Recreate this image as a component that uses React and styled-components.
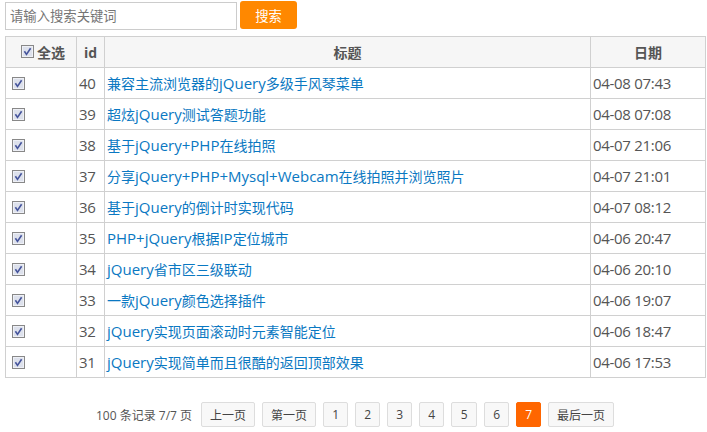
import React from "react";
import styled, { createGlobalStyle } from "styled-components";

const Global = createGlobalStyle`
  html, body { margin: 0; padding: 0; background: #fff; }
  body { font-family: "Open Sans", "Noto Sans CJK SC", sans-serif; font-size: 14px; color: #555; }
`;
const Page = styled.div`
  width: 707px; height: 432px; padding: 1px 2px 0 5px; box-sizing: border-box; overflow: hidden;
`;
const SearchBar = styled.form`
  display: flex; align-items: flex-start; gap: 3px; height: 35px; margin: 0;
`;
const SearchInput = styled.input`
  width: 232px; height: 28px; margin-top: 1px; box-sizing: border-box; border: 1px solid #ccc; padding: 0 4px;
  font: 13.33px "Open Sans", "Noto Sans CJK SC", sans-serif; color: #555; outline: none;
  &::placeholder { color: #757575; opacity: 1; }
`;
const SearchButton = styled.button`
  width: 57px; height: 28px; border: 0; border-radius: 3px; background: #ff8800; color: #fff; padding: 0;
  font: 13.33px "Open Sans", "Noto Sans CJK SC", sans-serif;
`;
const Table = styled.table`
  width: 700px; border-collapse: collapse; table-layout: fixed;
`;
const HeadCell = styled.th`
  height: 31px; padding: 0; background: #f6f6f6; border: 1px solid #d0d0d0; font-size: 14px; font-weight: 700; color: #555; text-align: center; box-sizing: border-box;
`;
const Cell = styled.td`
  height: 31px; padding: 0 2px; border: 1px solid #d0d0d0; font-size: 14px; color: #555; box-sizing: border-box; white-space: nowrap;
`;
const CheckCell = styled(Cell)` padding-left: 6px; `;
const IdCell = styled(Cell)` font-size: 15px; letter-spacing: -.4px; `;
const DateCell = styled(Cell)` font-size: 15px; letter-spacing: -.3px; `;
const Link = styled.a` color: #0a78c2; text-decoration: none; `;
const Latin = styled.span` font-size: 15px; `;
const SelectAll = styled.span`
  display: inline-flex; align-items: center; gap: 3px; margin-left: 4px;
`;
const CheckIcon = styled.svg`
  width: 13px; height: 13px; display: block; flex: none;
`;
const Pager = styled.nav`
  display: flex; align-items: center; gap: 7px; margin-top: 24px; height: 25px; font-size: 12px; padding-left: 91px;
`;
const Summary = styled.span` color: #555; margin-right: 2px; `;
const PageButton = styled.a`
  display: flex; align-items: center; justify-content: center; height: 25px; box-sizing: border-box; width: ${p => p.$w || 25}px;
  border: 1px solid ${p => p.$active ? "#ff6600" : "#ddd"}; border-radius: 2px;
  background: ${p => p.$active ? "#ff6600" : "#f8f8f8"}; color: ${p => p.$active ? "#fff" : "#444"};
`;

const Check = () => (
  <CheckIcon viewBox="0 0 13 13">
    <rect x=".5" y=".5" width="12" height="12" fill="#dfe3ee" stroke="#888" />
    <rect x="1.5" y="1.5" width="10" height="10" fill="#dde1ec" stroke="#eef0f6" />
    <path d="M3.4 6.2 5.5 9.4 9.6 3.2" fill="none" stroke="#45549c" strokeWidth="1.6" />
  </CheckIcon>
);

const Title = ({ text }) =>
  text.split(/([A-Za-z+]+)/).map((part, i) => (i % 2 ? <Latin key={i}>{part}</Latin> : part));

const rows = [
  [40, "兼容主流浏览器的jQuery多级手风琴菜单", "04-08 07:43"],
  [39, "超炫jQuery测试答题功能", "04-08 07:08"],
  [38, "基于jQuery+PHP在线拍照", "04-07 21:06"],
  [37, "分享jQuery+PHP+Mysql+Webcam在线拍照并浏览照片", "04-07 21:01"],
  [36, "基于jQuery的倒计时实现代码", "04-07 08:12"],
  [35, "PHP+jQuery根据IP定位城市", "04-06 20:47"],
  [34, "jQuery省市区三级联动", "04-06 20:10"],
  [33, "一款jQuery颜色选择插件", "04-06 19:07"],
  [32, "jQuery实现页面滚动时元素智能定位", "04-06 18:47"],
  [31, "jQuery实现简单而且很酷的返回顶部效果", "04-06 17:53"],
];

export default function App() {
  return (
    <Page>
      <Global />
      <SearchBar>
        <SearchInput placeholder="请输入搜索关键词" />
        <SearchButton type="button">搜索</SearchButton>
      </SearchBar>
      <Table>
        <colgroup>
          <col style={{ width: 71 }} /><col style={{ width: 28 }} /><col style={{ width: 486 }} /><col style={{ width: 115 }} />
        </colgroup>
        <thead>
          <tr>
            <HeadCell><SelectAll><Check />全选</SelectAll></HeadCell>
            <HeadCell>id</HeadCell>
            <HeadCell>标题</HeadCell>
            <HeadCell>日期</HeadCell>
          </tr>
        </thead>
        <tbody>
          {rows.map(([id, title, date]) => (
            <tr key={id}>
              <CheckCell><Check /></CheckCell>
              <IdCell>{id}</IdCell>
              <Cell><Link><Title text={title} /></Link></Cell>
              <DateCell>{date}</DateCell>
            </tr>
          ))}
        </tbody>
      </Table>
      <Pager>
        <Summary>100 条记录 7/7 页</Summary>
        <PageButton $w={54}>上一页</PageButton>
        <PageButton $w={54}>第一页</PageButton>
        {[1, 2, 3, 4].map(n => <PageButton key={n}>{n}</PageButton>)}
        <PageButton $w={26}>5</PageButton>
        <PageButton>6</PageButton>
        <PageButton $active>7</PageButton>
        <PageButton $w={66}>最后一页</PageButton>
      </Pager>
    </Page>
  );
}
